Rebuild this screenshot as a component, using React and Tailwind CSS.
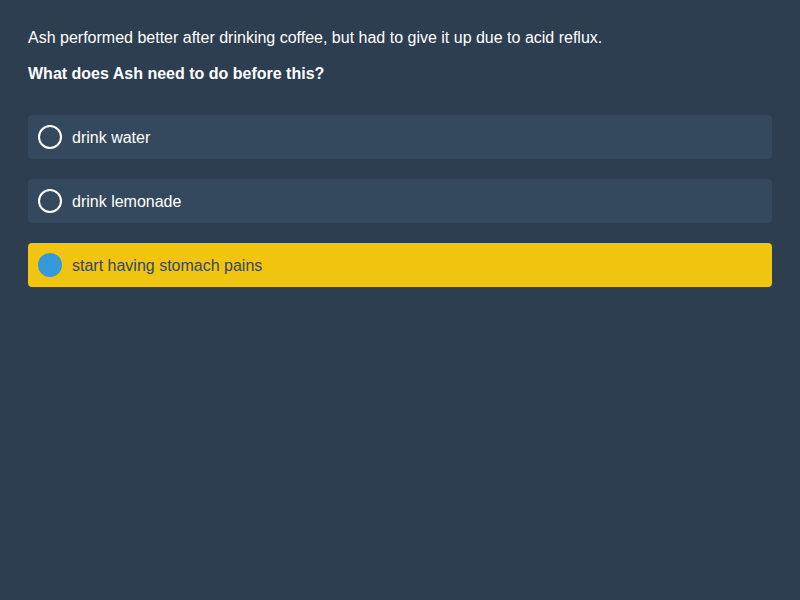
export default function App() {
  const opts = [
    { t: "drink water", sel: false },
    { t: "drink lemonade", sel: false },
    { t: "start having stomach pains", sel: true },
  ];
  return (
    <div className="w-[800px] h-[600px] bg-[#2c3e50] px-[28px] pt-[28px] text-white" style={{ fontFamily: '"Liberation Sans", Arial, sans-serif' }}>
      <p className="text-[16px] leading-[20px]">Ash performed better after drinking coffee, but had to give it up due to acid reflux.</p>
      <p className="text-[16px] leading-[20px] font-bold mt-[16px]">What does Ash need to do before this?</p>
      <div className="mt-[31px] flex flex-col gap-[20px]">
        {opts.map((o) => (
          <div key={o.t} className={`flex items-center gap-[10px] h-[44px] px-[10px] rounded-[4px] ${o.sel ? "bg-[#f1c40f] text-[#34495e]" : "bg-[#34495e] text-white"}`}>
            {o.sel ? (
              <div className="w-[24px] h-[24px] rounded-full bg-[#3498db]" />
            ) : (
              <div className="w-[24px] h-[24px] rounded-full border-2 border-white" />
            )}
            <span className="text-[16px] leading-[20px] pt-[2px]">{o.t}</span>
          </div>
        ))}
      </div>
    </div>
  );
}
